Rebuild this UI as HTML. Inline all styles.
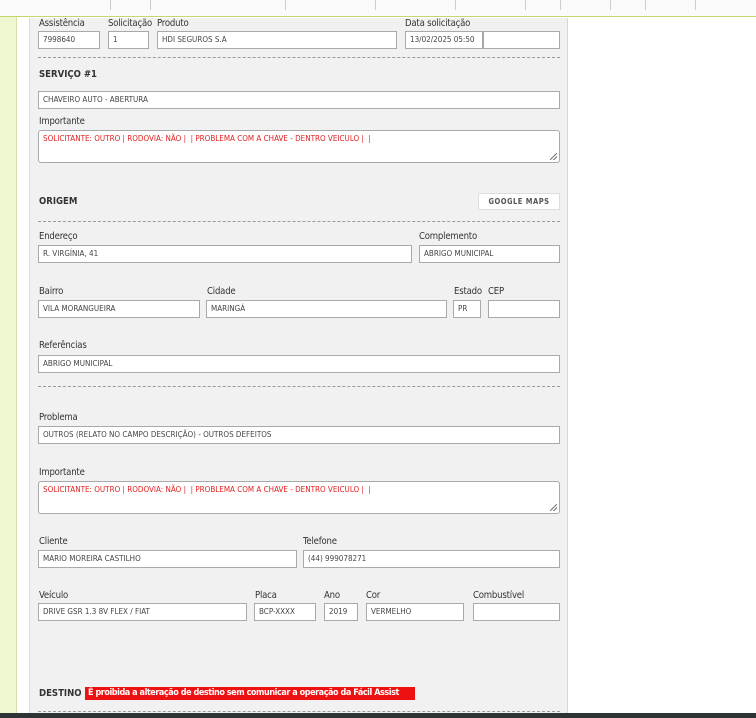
<!DOCTYPE html>
<html><head><meta charset="utf-8"><style>
*{margin:0;padding:0;box-sizing:border-box}
body{width:756px;height:718px;overflow:hidden;background:#fff;font-family:"DejaVu Sans Condensed","Liberation Sans",sans-serif;position:relative;color:#333}
.a{position:absolute}
.l{position:absolute;font-size:9.5px;color:#333;letter-spacing:-0.2px}
.i{position:absolute;height:18px;background:#fff;border:1px solid #a9a9a9;font-size:8px;line-height:16px;padding-left:4px;color:#444;white-space:nowrap;overflow:hidden}
.t{position:absolute;height:33px;background:#fff;border:1px solid #a9a9a9;border-radius:3px;font-size:8px;color:#e02020;padding:3px 4px}
.t:after{content:"";position:absolute;right:2px;bottom:2px;width:7px;height:7px;background:linear-gradient(135deg,transparent 45%,#777 46%,#777 54%,transparent 55%,transparent 70%,#777 71%,#777 79%,transparent 80%)}
.d{position:absolute;left:38px;width:522px;border-top:1px dashed #9a9a9a;height:0}
.h{position:absolute;font-size:9.5px;font-weight:bold;color:#333}
.k{position:absolute;top:0;width:1px;height:10px;background:#ccc}
</style></head><body>
<div class="a" style="left:0;top:0;width:17px;height:718px;background:#eef7cf;border-right:1px solid #d6e3a8"></div>
<div class="a" style="left:0;top:0;width:756px;height:17px;background:#fafafa;border-bottom:1px solid #c2d86a"></div>
<div class="k" style="left:110px"></div><div class="k" style="left:150px"></div><div class="k" style="left:285px"></div><div class="k" style="left:375px"></div><div class="k" style="left:455px"></div><div class="k" style="left:525px"></div><div class="k" style="left:560px"></div><div class="k" style="left:610px"></div><div class="k" style="left:645px"></div><div class="k" style="left:695px"></div>
<div class="a" style="left:29px;top:18px;width:539px;height:700px;background:#f1f1f1;border-left:1px solid #ddd;border-right:1px solid #d6d6d6"></div>

<div class="l" style="left:39px;top:18px">Assistência</div>
<div class="l" style="left:108px;top:18px">Solicitação</div>
<div class="l" style="left:157px;top:18px">Produto</div>
<div class="l" style="left:405px;top:18px">Data solicitação</div>
<div class="i" style="left:38px;top:31px;width:62px">7998640</div>
<div class="i" style="left:108px;top:31px;width:41px">1</div>
<div class="i" style="left:157px;top:31px;width:240px">HDI SEGUROS S.A</div>
<div class="i" style="left:405px;top:31px;width:78px">13/02/2025 05:50</div>
<div class="i" style="left:483px;top:31px;width:77px"></div>
<div class="d" style="top:57px"></div>
<div class="h" style="left:39px;top:69px">SERVIÇO #1</div>
<div class="i" style="left:38px;top:91px;width:522px">CHAVEIRO AUTO - ABERTURA</div>
<div class="l" style="left:39px;top:116px">Importante</div>
<div class="t" style="left:38px;top:130px;width:522px">SOLICITANTE: OUTRO | RODOVIA: NÃO | &nbsp;| PROBLEMA COM A CHAVE - DENTRO VEICULO | &nbsp;|</div>

<div class="h" style="left:39px;top:196px">ORIGEM</div>
<div class="a" style="left:478px;top:193px;width:82px;height:17px;background:#fff;border:1px solid #ddd;font-size:7.5px;font-weight:bold;color:#555;text-align:center;line-height:15px;letter-spacing:0.5px">GOOGLE MAPS</div>
<div class="d" style="top:221px"></div>
<div class="l" style="left:39px;top:231px">Endereço</div>
<div class="l" style="left:419px;top:231px">Complemento</div>
<div class="i" style="left:38px;top:245px;width:374px">R. VIRGÍNIA, 41</div>
<div class="i" style="left:419px;top:245px;width:141px">ABRIGO MUNICIPAL</div>
<div class="l" style="left:39px;top:286px">Bairro</div>
<div class="l" style="left:207px;top:286px">Cidade</div>
<div class="l" style="left:454px;top:286px">Estado</div>
<div class="l" style="left:488px;top:286px">CEP</div>
<div class="i" style="left:38px;top:300px;width:162px">VILA MORANGUEIRA</div>
<div class="i" style="left:206px;top:300px;width:241px">MARINGÁ</div>
<div class="i" style="left:453px;top:300px;width:28px">PR</div>
<div class="i" style="left:488px;top:300px;width:72px"></div>
<div class="l" style="left:39px;top:340px">Referências</div>
<div class="i" style="left:38px;top:355px;width:522px">ABRIGO MUNICIPAL</div>
<div class="d" style="top:386px"></div>
<div class="l" style="left:39px;top:412px">Problema</div>
<div class="i" style="left:38px;top:426px;width:522px">OUTROS (RELATO NO CAMPO DESCRIÇÃO) - OUTROS DEFEITOS</div>
<div class="l" style="left:39px;top:467px">Importante</div>
<div class="t" style="left:38px;top:481px;width:522px">SOLICITANTE: OUTRO | RODOVIA: NÃO | &nbsp;| PROBLEMA COM A CHAVE - DENTRO VEICULO | &nbsp;|</div>
<div class="l" style="left:39px;top:536px">Cliente</div>
<div class="l" style="left:303px;top:536px">Telefone</div>
<div class="i" style="left:38px;top:550px;width:259px">MARIO MOREIRA CASTILHO</div>
<div class="i" style="left:303px;top:550px;width:257px">(44) 999078271</div>
<div class="l" style="left:39px;top:590px">Veículo</div>
<div class="l" style="left:255px;top:590px">Placa</div>
<div class="l" style="left:324px;top:590px">Ano</div>
<div class="l" style="left:366px;top:590px">Cor</div>
<div class="l" style="left:473px;top:590px">Combustível</div>
<div class="i" style="left:38px;top:603px;width:209px">DRIVE GSR 1.3 8V FLEX / FIAT</div>
<div class="i" style="left:254px;top:603px;width:62px">BCP-XXXX</div>
<div class="i" style="left:324px;top:603px;width:34px">2019</div>
<div class="i" style="left:366px;top:603px;width:98px">VERMELHO</div>
<div class="i" style="left:473px;top:603px;width:87px"></div>
<div class="h" style="left:39px;top:688px">DESTINO</div>
<div class="a" style="left:85px;top:687px;width:330px;height:13px;background:#ee1111;color:#fff;font-size:9px;font-weight:bold;line-height:13px;padding-left:3px;white-space:nowrap;letter-spacing:-0.45px;overflow:hidden">É proibida a alteração de destino sem comunicar a operação da Fácil Assist</div>
<div class="d" style="top:711px"></div>
<div class="a" style="left:0;top:713px;width:756px;height:5px;background:#2e3336"></div>
</body></html>
